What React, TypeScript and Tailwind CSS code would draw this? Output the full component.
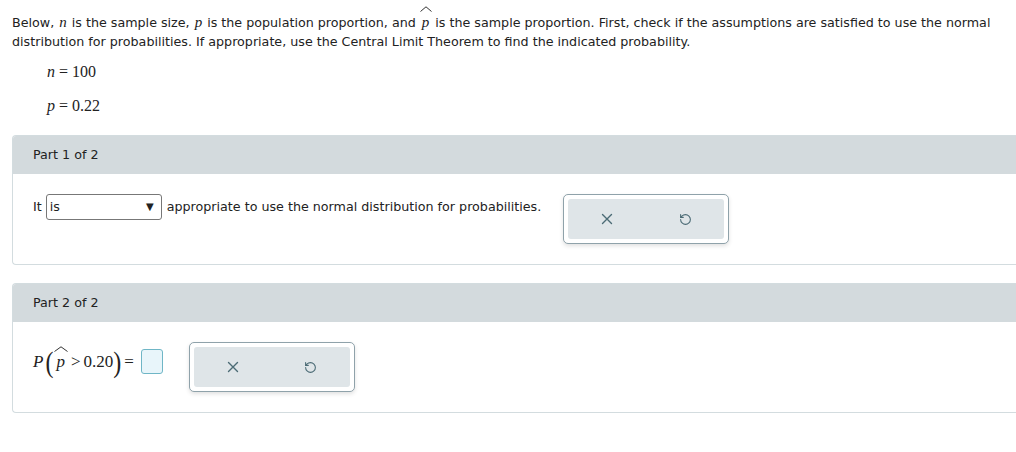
import React from 'react';
import { RotateCcw } from 'lucide-react';

const serif = { fontFamily: '"Liberation Serif", "Times New Roman", serif' };

const XIcon = () => (
    <svg width="12" height="12" viewBox="0 0 12 12" fill="none" stroke="#4b6b75" strokeWidth="1.4" strokeLinecap="round">
        <path d="M1.5 1.5l9 9M10.5 1.5l-9 9" />
    </svg>
);

const ButtonGroup = () => (
    <div className="w-[166px] h-[50px] p-1 border border-[#8fa2aa] rounded-[5px] bg-white shadow-[0_2px_4px_rgba(0,0,0,0.12)]">
        <div className="flex h-full bg-[#dfe5e8] rounded-[3px]">
            <button className="flex-1 flex items-center justify-center"><XIcon /></button>
            <button className="flex-1 flex items-center justify-center">
                <RotateCcw size={13} strokeWidth={2} color="#4b6b75" />
            </button>
        </div>
    </div>
);

// p with a wide hat drawn over it
const Hat: React.FC<{ children: React.ReactNode; top: number; w: number }> = ({ children, top, w }) => (
    <span className="relative inline-block">
        <svg
            className="absolute left-1/2 -translate-x-1/2"
            style={{ top }}
            width={w}
            height="6"
            viewBox={`0 0 ${w} 6`}
            fill="none"
            stroke="#333"
            strokeWidth="1"
        >
            <path d={`M0.5 5.5L${w / 2} 0.8L${w - 0.5} 5.5`} />
        </svg>
        {children}
    </span>
);

const Part: React.FC<{ title: string; children: React.ReactNode }> = ({ title, children }) => (
    <div className="border-l border-t border-b border-[#d3dcdf] rounded-l-[4px] overflow-hidden">
        <div className="h-[38px] bg-[#d3dadd] flex items-center pl-5">{title}</div>
        <div className="pl-5 pt-5 pb-5">{children}</div>
    </div>
);

export default function App() {
    return (
        <div className="bg-white text-[#222] text-[12.7px] pt-[13px] pl-3" style={{ fontFamily: '"DejaVu Sans", Verdana, sans-serif' }}>
            <div className="leading-[19px] whitespace-nowrap">
                <div>
                    <span>Below, </span>
                    <i style={serif} className="text-[15px] leading-none px-[1px]">n</i>
                    <span> is the sample size, </span>
                    <i style={serif} className="text-[15px] leading-none px-[1px]">p</i>
                    <span> is the population proportion, and </span>
                    <i style={serif} className="text-[15px] leading-none px-[2px]"><Hat top={-9} w={12}>p</Hat></i>
                    <span> is the sample proportion. First, check if the assumptions are satisfied to use the normal</span>
                </div>
                <div>distribution for probabilities. If appropriate, use the Central Limit Theorem to find the indicated probability.</div>
            </div>
            <div className="pl-[35px] pt-[12px] text-[16px] leading-[18px]" style={serif}>
                <div><i>n</i> = 100</div>
                <div className="mt-4"><i>p</i> = 0.22</div>
            </div>

            <div className="mt-5">
                <Part title="Part 1 of 2">
                    <div className="flex items-start">
                        <span className="leading-[26px] mr-1">It</span>
                        <div className="relative w-[116px] h-[26px] border border-[#777] rounded-[3px] flex items-center pl-[3px]">
                            is
                            <span className="absolute right-[7px] top-[7px] text-[10px] leading-none">&#9660;</span>
                        </div>
                        <span className="leading-[26px] ml-[5px]">appropriate to use the normal distribution for probabilities.</span>
                        <div className="ml-[22px]"><ButtonGroup /></div>
                    </div>
                </Part>
            </div>

            <div className="mt-[18px]">
                <Part title="Part 2 of 2">
                    <div className="flex items-start">
                        <div className="flex items-center mt-[7px] text-[17px]" style={serif}>
                            <i className="mr-[2px]">P</i>
                            <span className="text-[24px] leading-none scale-y-125 font-light">(</span>
                            <i className="mx-[3px]"><Hat top={-3} w={14}>p</Hat></i>
                            <span className="mx-[3px]">&gt;</span>
                            <span>0.20</span>
                            <span className="text-[24px] leading-none scale-y-125 font-light">)</span>
                            <span className="ml-[3px]">=</span>
                            <div className="ml-[7px] w-[22px] h-[25px] bg-[#e8f5fa] border border-[#6fb6c6] rounded-[3px]" />
                        </div>
                        <div className="ml-[26px]"><ButtonGroup /></div>
                    </div>
                </Part>
            </div>
            <div className="h-10" />
        </div>
    );
}
